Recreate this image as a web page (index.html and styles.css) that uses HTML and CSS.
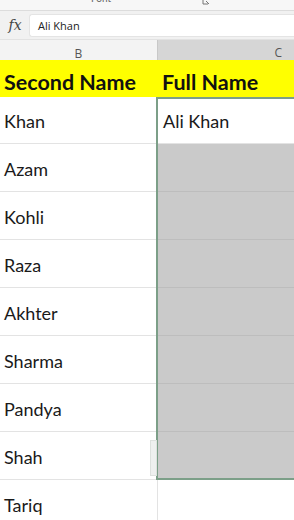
FILE: index.html
```html
<!DOCTYPE html>
<html>
<head>
<meta charset="utf-8">
<link rel="stylesheet" href="styles.css">
</head>
<body>
<div class="app">
  <div class="ribbon">
    <span class="group-label">Font</span>
    <svg class="launcher" width="8" height="6" viewBox="0 0 8 6"><path d="M1 0v4h5" fill="none" stroke="#777" stroke-width="1"/><path d="M4 1l3 3" stroke="#777" stroke-width="1"/></svg>
  </div>
  <div class="formula">
    <span class="fx">fx</span>
    <div class="input">Ali Khan</div>
  </div>
  <div class="colheads">
    <div class="colhead b">B</div>
    <div class="colhead c">C</div>
  </div>
  <div class="sheet">
    <div class="row head">
      <div class="cell">Second Name</div>
      <div class="cell">Full Name</div>
    </div>
    <div class="row first">
      <div class="cell">Khan</div>
      <div class="cell active">Ali Khan</div>
    </div>
    <div class="row"><div class="cell">Azam</div><div class="cell sel"></div></div>
    <div class="row"><div class="cell">Kohli</div><div class="cell sel"></div></div>
    <div class="row"><div class="cell">Raza</div><div class="cell sel"></div></div>
    <div class="row"><div class="cell">Akhter</div><div class="cell sel"></div></div>
    <div class="row"><div class="cell">Sharma</div><div class="cell sel"></div></div>
    <div class="row"><div class="cell">Pandya</div><div class="cell sel"></div></div>
    <div class="row"><div class="cell">Shah</div><div class="cell sel"></div></div>
    <div class="row"><div class="cell">Tariq</div><div class="cell"></div></div>
    <div class="selection"></div>
    <div class="handle"></div>
  </div>
</div>
</body>
</html>
```
FILE: styles.css
```css
html, body {
  margin: 0;
  padding: 0;
  background: #ffffff;
}
.app {
  width: 294px;
  height: 520px;
  overflow: hidden;
  font-family: Lato, "Open Sans", "Liberation Sans", sans-serif;
}
.ribbon {
  height: 10px;
  background: #f7f7f7;
  border-bottom: 1px solid #dcdcdc;
  position: relative;
  overflow: hidden;
}
.group-label {
  position: absolute;
  left: 91px;
  top: -8px;
  font-size: 10px;
  color: #666;
}
.launcher {
  position: absolute;
  left: 202px;
  top: 0;
}
.formula {
  height: 28px;
  background: #f1f1f1;
  display: flex;
  align-items: center;
  border-bottom: 1px solid #e2e2e2;
}
.fx {
  width: 28px;
  text-align: center;
  font-family: "DejaVu Serif", "Liberation Serif", serif;
  font-style: italic;
  font-size: 14px;
  color: #444;
  padding-left: 1px;
}
.input {
  flex: 1;
  height: 21px;
  background: #fff;
  border-radius: 3px 0 0 3px;
  border: 1px solid #e4e4e4;
  border-right: none;
  display: flex;
  align-items: center;
  padding-left: 8px;
  font-family: "Open Sans", "Liberation Sans", sans-serif;
  font-size: 11px;
  color: #222;
}
.colheads {
  display: grid;
  grid-template-columns: 157px 1fr;
  height: 20px;
  background: #f3f3f3;
}
.colhead {
  display: flex;
  align-items: center;
  justify-content: center;
  padding-top: 4px;
  box-sizing: border-box;
  font-family: "Open Sans", "Liberation Sans", sans-serif;
  font-size: 12px;
  color: #555;
}
.colhead.c {
  background: #d6d6d6;
  border-bottom: 2px solid #217346;
  border-left: 1px solid #c8c8c8;
  justify-content: flex-end;
  padding-right: 12px;
  color: #555;
}
.sheet {
  position: relative;
}
.row {
  display: grid;
  grid-template-columns: 157px 1fr;
  height: 48px;
}
.row.head {
  height: 37px;
  background: #ffff00;
}
.row.first {
  height: 47px;
}
.cell {
  display: flex;
  align-items: center;
  padding: 2px 0 0 4px;
  font-size: 18px;
  color: #1a1a1a;
  border-bottom: 1px solid #e3e3e3;
  box-sizing: border-box;
}
.cell + .cell {
  padding-left: 5px;
  border-left: 1px solid #e3e3e3;
}
.row.head .cell {
  font-weight: bold;
  font-size: 21.5px;
  padding-top: 6px;
  color: #111;
  border-bottom: none;
  border-left: none;
}
.cell.active {
  background: #ffffff;
}
.cell.sel {
  background: #cacaca;
  border-bottom-color: #bdbdbd;
}
.selection {
  position: absolute;
  left: 156px;
  top: 37px;
  width: 142px;
  height: 383px;
  border: 2px solid #7c9f88;
  box-sizing: border-box;
  pointer-events: none;
}
.handle {
  position: absolute;
  left: 150px;
  top: 380px;
  width: 7px;
  height: 36px;
  background: #eef0ef;
  border: 1px solid #dde1de;
  box-sizing: border-box;
}
```
